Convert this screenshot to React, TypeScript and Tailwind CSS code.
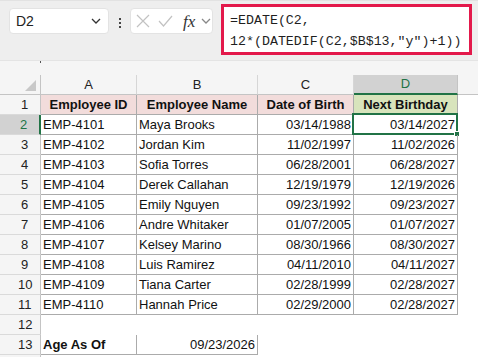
import React from 'react';

const ROWS = [
  ['EMP-4101', 'Maya Brooks', '03/14/1988', '03/14/2027'],
  ['EMP-4102', 'Jordan Kim', '11/02/1997', '11/02/2026'],
  ['EMP-4103', 'Sofia Torres', '06/28/2001', '06/28/2027'],
  ['EMP-4104', 'Derek Callahan', '12/19/1979', '12/19/2026'],
  ['EMP-4105', 'Emily Nguyen', '09/23/1992', '09/23/2027'],
  ['EMP-4106', 'Andre Whitaker', '01/07/2005', '01/07/2027'],
  ['EMP-4107', 'Kelsey Marino', '08/30/1966', '08/30/2027'],
  ['EMP-4108', 'Luis Ramirez', '04/11/2010', '04/11/2027'],
  ['EMP-4109', 'Tiana Carter', '02/28/1999', '02/28/2027'],
  ['EMP-4110', 'Hannah Price', '02/29/2000', '02/28/2027'],
];

function Chevron({ className }: { className?: string }) {
  return (
    <svg width="10" height="6" viewBox="0 0 10 6" className={className}>
      <path d="M1 1l4 4 4-4" fill="none" stroke="currentColor" strokeWidth="1.3" />
    </svg>
  );
}

function RowHead({ n, active }: { n?: number; active?: boolean }) {
  return (
    <div
      className={`h-[20px] border-b border-b-[#dadada] flex items-center justify-end pr-[9px] leading-[19px] ${
        active
          ? 'bg-[#d2d2d2] text-[#217346] border-r-2 border-r-[#217346]'
          : 'bg-[#f5f5f5] text-[#222] border-r border-r-[#c4c4c4]'
      }`}
    >
      <span className="w-[13px] text-center">{n}</span>
    </div>
  );
}

export default function App() {
  return (
    <div className="w-[478px] h-[357px] overflow-hidden bg-white font-['Liberation_Sans',Arial,sans-serif] text-[13px] text-[#111]">
      {/* formula bar */}
      <div className="h-[61px] bg-[#eeeeee] border-t border-t-[#e2e2e2] border-b border-b-[#e4e4e4] flex items-start">
        <div className="ml-[9px] mt-[7px] w-[100px] h-[26px] rounded-[4px] bg-white border border-[#e3e3e3] flex items-center justify-between pl-[6px] pr-[7px] text-[14px] text-[#222]">
          <span>D2</span>
          <Chevron className="text-[#333]" />
        </div>
        <div className="ml-[10px] mt-[17px] flex flex-col gap-[2px]">
          <span className="w-[2px] h-[2px] bg-[#444]" />
          <span className="w-[2px] h-[2px] bg-[#444]" />
          <span className="w-[2px] h-[2px] bg-[#444]" />
        </div>
        <div className="ml-[9px] mt-[7px] w-[83px] h-[26px] rounded-[4px] bg-white border border-[#e3e3e3] flex items-center pl-[5px]">
          <svg width="14" height="14" viewBox="0 0 14 14">
            <path d="M1 1l12 12M13 1L1 13" stroke="#c2c2c2" strokeWidth="1.2" fill="none" />
          </svg>
          <svg width="15" height="12" viewBox="0 0 15 12" className="ml-[8px]">
            <path d="M1 6l4.5 5L14 1" stroke="#c2c2c2" strokeWidth="1.2" fill="none" />
          </svg>
          <span className="ml-[10px] font-['Liberation_Serif',serif] italic text-[17px] text-[#333] leading-none">fx</span>
          <Chevron className="ml-[6px] text-[#888]" />
        </div>
        <div className="ml-[8px] mt-[3px] w-[251px] h-[51px] border-[3px] border-[#e3194b] bg-white pl-[6px] pt-[3px] font-['Liberation_Mono',monospace] text-[13.3px] leading-[21px] text-[#1f1f1f] whitespace-pre">
          <div>=EDATE(C2,</div>
          <div>12*(DATEDIF(C2,$B$13,"y")+1))</div>
        </div>
      </div>

      {/* gap above column headers */}
      <div className="h-[14px] bg-[#f5f5f5] pl-[40px]">
        <div className="w-px h-[2px] bg-[#555]" />
      </div>

      {/* sheet */}
      <div className="grid grid-cols-[41px_96px_121px_96px_104px_20px]">
        {/* column header */}
        <div className="h-[20px] bg-[#f5f5f5] border-r border-r-[#c4c4c4] border-b border-b-[#c4c4c4] relative">
          <svg width="11" height="11" viewBox="0 0 11 11" className="absolute right-[4px] bottom-[3px]">
            <path d="M11 0V11H0Z" fill="#c8c8c8" />
          </svg>
        </div>
        {['A', 'B', 'C'].map((c) => (
          <div
            key={c}
            className="h-[20px] bg-[#f5f5f5] border-r border-r-[#d6d6d6] border-b border-b-[#c4c4c4] flex items-center justify-center text-[#222]"
          >
            {c}
          </div>
        ))}
        <div className="h-[20px] bg-[#d2d2d2] border-r border-r-[#c4c4c4] border-b-2 border-b-[#217346] flex items-center justify-center text-[#217346]">
          D
        </div>
        <div className="h-[20px] bg-[#f5f5f5] border-b border-b-[#c4c4c4]" />

        {/* row 1 */}
        <RowHead n={1} />
        {['Employee ID', 'Employee Name', 'Date of Birth'].map((h) => (
          <div
            key={h}
            className="h-[20px] bg-[#f2dcdb] border-r border-b border-[#ababab] flex items-center justify-center font-bold whitespace-nowrap"
          >
            {h}
          </div>
        ))}
        <div className="h-[20px] bg-[#d8e4bc] border-r border-b border-[#ababab] flex items-center justify-center font-bold whitespace-nowrap">
          Next Birthday
        </div>
        <div className="h-[20px]" />

        {/* data rows */}
        {ROWS.map((r, i) => (
          <React.Fragment key={r[0]}>
            <RowHead n={i + 2} active={i === 0} />
            <div className="h-[20px] border-r border-b border-[#ababab] pl-[2px] leading-[19px] whitespace-nowrap">{r[0]}</div>
            <div className="h-[20px] border-r border-b border-[#ababab] pl-[2px] leading-[19px] whitespace-nowrap">{r[1]}</div>
            <div className="h-[20px] border-r border-b border-[#ababab] pr-[2px] text-right leading-[19px]">{r[2]}</div>
            <div className="h-[20px] border-r border-b border-[#ababab] pr-[2px] text-right leading-[19px] relative">
              {r[3]}
              {i === 0 && (
                <>
                  <div className="absolute -left-[2px] -top-[2px] -right-[1px] -bottom-[1px] border-2 border-[#217346]" />
                  <div className="absolute -right-[3px] -bottom-[3px] w-[6px] h-[6px] bg-[#217346] border border-white" />
                </>
              )}
            </div>
            <div className="h-[20px]" />
          </React.Fragment>
        ))}

        {/* row 12 */}
        <RowHead n={12} />
        <div className="h-[20px] col-span-5" />

        {/* row 13 */}
        <RowHead n={13} />
        <div className="h-[20px] border-r border-b border-[#ababab] pl-[2px] leading-[19px] font-bold">Age As Of</div>
        <div className="h-[20px] border-r border-b border-[#ababab] pr-[2px] text-right leading-[19px]">09/23/2026</div>
        <div className="h-[20px] col-span-3" />

        <RowHead />
      </div>
    </div>
  );
}
